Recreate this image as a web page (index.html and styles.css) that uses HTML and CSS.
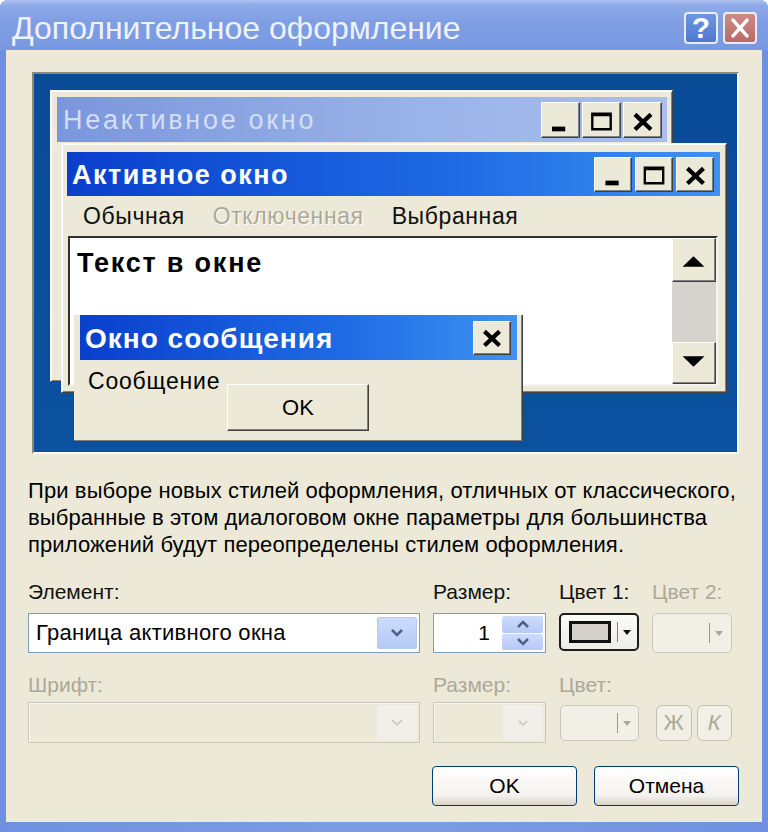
FILE: index.html
```html
<!DOCTYPE html>
<html lang="ru">
<head>
<meta charset="utf-8">
<title>Дополнительное оформление</title>
<link rel="stylesheet" href="styles.css">
</head>
<body>
<div class="dialog">
  <div class="titlebar">
    <span class="title">Дополнительное оформление</span>
    <div class="caption-btns">
      <span class="cap-btn help">?</span>
      <span class="cap-btn close">
        <svg viewBox="0 0 34 32" width="30" height="28"><path d="M9 7l16 18M25 7L9 25" stroke="#fff" stroke-width="4" stroke-linecap="round"/></svg>
      </span>
    </div>
  </div>

  <div class="content">
    <div class="preview">
      <div class="win win-inactive">
        <div class="win-title inactive-title">
          <span class="win-caption">Неактивное окно</span>
          <div class="win-btns">
            <span class="wbtn"><svg viewBox="0 0 38 36"><rect x="10" y="25" width="14" height="5"/></svg></span>
            <span class="wbtn"><svg viewBox="0 0 38 36"><path d="M8 10h22v19H8z M10.5 14h17v12.5h-17z" fill-rule="evenodd"/></svg></span>
            <span class="wbtn"><svg viewBox="0 0 38 36"><path d="M11 12l17 16M28 12L11 28" stroke="#000" stroke-width="4.5"/></svg></span>
          </div>
        </div>
      </div>

      <div class="win win-active">
        <div class="win-title active-title">
          <span class="win-caption bold">Активное окно</span>
          <div class="win-btns active-btns">
            <span class="wbtn"><svg viewBox="0 0 38 35"><rect x="11" y="24" width="14" height="5"/></svg></span>
            <span class="wbtn"><svg viewBox="0 0 38 35"><path d="M8 9h22v19H8z M10.5 13h17v12.5h-17z" fill-rule="evenodd"/></svg></span>
            <span class="wbtn"><svg viewBox="0 0 38 35"><path d="M11 11l17 16M28 11L11 27" stroke="#000" stroke-width="4.5"/></svg></span>
          </div>
        </div>
        <div class="menu">
          <span>Обычная</span>
          <span class="disabled">Отключенная</span>
          <span>Выбранная</span>
        </div>
        <div class="textarea">
          <div class="text-body">Текст в окне</div>
          <div class="scrollbar">
            <span class="sbtn"><svg viewBox="0 0 44 44" width="44" height="44"><path d="M10 29h23L21.5 18z"/></svg></span>
            <span class="track"></span>
            <span class="sbtn down"><svg viewBox="0 0 44 42" width="44" height="42"><path d="M10 14h23L21.5 25z"/></svg></span>
          </div>
        </div>
      </div>

      <div class="msgbox">
        <div class="win-title active-title msg-title">
          <span class="win-caption bold">Окно сообщения</span>
          <span class="wbtn msg-close"><svg viewBox="0 0 38 34"><path d="M11 10l16 15M27 10L11 25" stroke="#000" stroke-width="4.5"/></svg></span>
        </div>
        <div class="msg-text">Сообщение</div>
        <span class="msg-ok">OK</span>
      </div>
    </div>

    <p class="note">При выборе новых стилей оформления, отличных от классического,<br>выбранные в этом диалоговом окне параметры для большинства<br>приложений будут переопределены стилем оформления.</p>

    <div class="fields">
      <div class="field">
        <label>Элемент:</label>
        <div class="combo">
          <span class="combo-text">Граница активного окна</span>
          <span class="drop"><svg viewBox="0 0 16 16" width="16" height="16"><path d="M3 5l5 5 5-5" fill="none" stroke="#4d6185" stroke-width="2.5"/></svg></span>
        </div>
      </div>
      <div class="field">
        <label>Размер:</label>
        <div class="combo spin">
          <span class="spin-val">1</span>
          <span class="spin-btns">
            <span class="spin-b"><svg viewBox="0 0 14 10" width="14" height="10"><path d="M2 8l5-5 5 5" fill="none" stroke="#4d6185" stroke-width="2.5"/></svg></span>
            <span class="spin-b"><svg viewBox="0 0 14 10" width="14" height="10"><path d="M2 2l5 5 5-5" fill="none" stroke="#4d6185" stroke-width="2.5"/></svg></span>
          </span>
        </div>
      </div>
      <div class="field">
        <label>Цвет 1:</label>
        <div class="colorbtn focus">
          <span class="swatch"></span>
          <span class="sep"></span>
          <span class="arrow"></span>
        </div>
      </div>
      <div class="field">
        <label class="off">Цвет 2:</label>
        <div class="colorbtn off-btn">
          <span class="swatch empty"></span>
          <span class="sep"></span>
          <span class="arrow"></span>
        </div>
      </div>

      <div class="field row2">
        <label class="off">Шрифт:</label>
        <div class="combo off-combo">
          <span class="combo-text"></span>
          <span class="drop"><svg viewBox="0 0 16 16" width="16" height="16"><path d="M3 5l5 5 5-5" fill="none" stroke="#c5c5c0" stroke-width="1.5"/></svg></span>
        </div>
      </div>
      <div class="field row2">
        <label class="off">Размер:</label>
        <div class="combo off-combo">
          <span class="combo-text"></span>
          <span class="drop"><svg viewBox="0 0 16 16" width="16" height="16"><path d="M4 6l4 4 4-4" fill="none" stroke="#c5c5c0" stroke-width="1.5"/></svg></span>
        </div>
      </div>
      <div class="field row2">
        <label class="off">Цвет:</label>
        <div class="colorbtn off-btn small">
          <span class="swatch empty"></span>
          <span class="sep"></span>
          <span class="arrow"></span>
        </div>
      </div>
      <div class="field row2">
        <label>&nbsp;</label>
        <div class="styles">
          <span class="stbtn b">Ж</span>
          <span class="stbtn i">К</span>
        </div>
      </div>
    </div>

    <div class="actions">
      <span class="btn">OK</span>
      <span class="btn">Отмена</span>
    </div>
  </div>
</div>
</body>
</html>
```

FILE: styles.css
```css
body {
	margin: 0;
	font-family: "Liberation Sans", Arial, sans-serif;
}
.dialog {
	width: 768px;
	height: 832px;
	display: flex;
	flex-direction: column;
	background: linear-gradient(to right, #6f90de, #7d9de3 50%, #6f90de);
	border-radius: 8px 8px 0 0;
}
.titlebar {
	height: 50px;
	display: flex;
	align-items: center;
	padding: 0 11px 0 12px;
	border-radius: 8px 8px 0 0;
	background: linear-gradient(#b0c4f0 0, #8eaae8 5px, #7f9ee3 45%, #7898e1);
}
.title {
	flex: 1;
	color: #eef2fc;
	font-size: 32px;
	padding-top: 6px;
}
.caption-btns {
	display: flex;
	gap: 5px;
	padding-top: 6px;
}
.cap-btn {
	width: 34px;
	height: 32px;
	box-sizing: border-box;
	border: 2px solid #e8eefb;
	border-radius: 4px;
	display: flex;
	align-items: center;
	justify-content: center;
}
.help {
	background: linear-gradient(#6d95e2, #4f78d2);
	color: #fff;
	font-size: 30px;
	font-weight: bold;
}
.close {
	background: linear-gradient(#cf8a86, #b86a69);
}
.content {
	flex: 1;
	margin: 0 6px 10px;
	background: #ece9d8;
	padding-top: 22px;
}

/* preview canvas */
.preview {
	position: relative;
	margin-left: 26px;
	width: 707px;
	height: 382px;
	box-sizing: border-box;
	border: 2px solid;
	border-color: #8a8878 #fcfcf8 #fcfcf8 #8a8878;
	background: linear-gradient(#0a4b98, #0b51a0);
}
.win {
	position: absolute;
	box-sizing: border-box;
	background: #ece9d8;
	border: 1px solid;
	border-color: #f4f3ee #404040 #404040 #f4f3ee;
	box-shadow: inset 1px 1px 0 #fff, inset -1px -1px 0 #808080;
}
.win-inactive {
	left: 16px;
	top: 16px;
	width: 623px;
	height: 292px;
	padding: 6px 5px 6px 6px;
}
.win-active {
	left: 27px;
	top: 69px;
	width: 666px;
	padding: 8px 6px 6px 5px;
}
.win-title {
	display: flex;
	align-items: center;
}
.inactive-title {
	height: 45px;
	background: linear-gradient(to right, #7b96dc, #9ab3e8 60%, #a8bfec);
}
.active-title {
	height: 44px;
	background: linear-gradient(to right, #0a3fcc, #1e6be4 60%, #3f92f2);
}
.win-caption {
	flex: 1;
	font-size: 27px;
	letter-spacing: 2.7px;
	padding-left: 6px;
	padding-top: 2px;
	color: #d4def5;
}
.win-caption.bold {
	font-weight: bold;
	color: #fff;
	padding-left: 5px;
	font-size: 27px;
	letter-spacing: 1.5px;
}
.win-btns {
	display: flex;
	gap: 2px;
	margin-right: 5px;
}
.active-btns {
	gap: 3px;
	margin-right: 6px;
}
.wbtn {
	width: 39px;
	height: 36px;
	box-sizing: border-box;
	background: #ece9d8;
	border: 1px solid;
	border-color: #fff #404040 #404040 #fff;
	box-shadow: inset -1px -1px 0 #808080;
	display: block;
}
.active-btns .wbtn {
	width: 38px;
	height: 35px;
}
.wbtn svg {
	width: 100%;
	height: 100%;
	display: block;
}
.menu {
	height: 40px;
	display: flex;
	align-items: center;
	gap: 28px;
	padding-left: 16px;
	font-size: 23px;
	letter-spacing: 0.6px;
	color: #111;
}
.menu .disabled {
	color: #aca899;
	text-shadow: 1px 1px 0 #fff;
}
.textarea {
	margin-left: 1px;
	width: 650px;
	height: 150px;
	box-sizing: border-box;
	display: flex;
	background: #fff;
	border: 2px solid;
	border-color: #303030 #f4f3ee #f4f3ee #303030;
}
.text-body {
	flex: 1;
	font-size: 27px;
	letter-spacing: 1.8px;
	font-weight: bold;
	padding: 10px 7px;
}
.scrollbar {
	width: 44px;
	display: flex;
	flex-direction: column;
}
.sbtn {
	height: 44px;
	box-sizing: border-box;
	background: #ece9d8;
	border: 1px solid;
	border-color: #fff #404040 #404040 #fff;
	box-shadow: inset -1px -1px 0 #808080;
	display: block;
}
.sbtn.down {
	height: 42px;
}
.sbtn svg {
	display: block;
	width: 100%;
	height: 100%;
}
.track {
	flex: 1;
	background: #d6d3ce;
}
.msgbox {
	position: absolute;
	left: 40px;
	top: 241px;
	width: 449px;
	height: 127px;
	box-sizing: border-box;
	background: #ece9d8;
	padding: 0 5px 0 6px;
	border-right: 1px solid #404040;
	border-bottom: 1px solid #404040;
	box-shadow: inset -1px -1px 0 #808080;
}
.msg-title {
	height: 45px;
}
.msg-title .win-caption.bold {
	font-size: 28px;
	letter-spacing: 1px;
}
.msg-close {
	width: 38px;
	height: 34px;
	margin-right: 6px;
}
.msg-text {
	font-size: 23px;
	letter-spacing: 0.8px;
	line-height: 26px;
	margin-top: 8px;
	padding-left: 8px;
}
.msg-ok {
	display: flex;
	align-items: center;
	justify-content: center;
	margin: -10px 0 0 147px;
	width: 142px;
	height: 47px;
	box-sizing: border-box;
	font-size: 22px;
	border: 1px solid;
	border-color: #fff #404040 #404040 #fff;
	box-shadow: inset -1px -1px 0 #808080;
}

/* lower part */
.note {
	margin: 23px 0 0 22px;
	font-size: 22px;
	letter-spacing: 0.1px;
	line-height: 27px;
	color: #000;
	white-space: nowrap;
}
.fields {
	margin: 22px 0 0 22px;
	display: grid;
	grid-template-columns: 392px 113px 80px 80px;
	column-gap: 13px;
}
.field {
	display: flex;
	flex-direction: column;
}
.field label {
	font-size: 21px;
	line-height: 24px;
	margin-bottom: 9px;
	color: #111;
}
.field.row2 label {
	margin-top: 20px;
	margin-bottom: 5px;
}
.field label.off {
	color: #aca899;
}
.combo {
	height: 40px;
	box-sizing: border-box;
	border: 1px solid #7f9db9;
	background: #fff;
	display: flex;
	align-items: center;
}
.combo-text {
	flex: 1;
	font-size: 22px;
	letter-spacing: 0.3px;
	padding-left: 7px;
}
.drop {
	width: 40px;
	height: 32px;
	margin-right: 2px;
	box-sizing: border-box;
	border: 1px solid #b8cbf3;
	border-radius: 2px;
	background: linear-gradient(#cddcfc, #b6c9f5);
	display: flex;
	align-items: center;
	justify-content: center;
}
.spin-val {
	flex: 1;
	text-align: right;
	font-size: 21px;
	padding-right: 12px;
}
.spin-btns {
	width: 41px;
	height: 34px;
	margin-right: 2px;
	display: flex;
	flex-direction: column;
	gap: 1px;
}
.spin-b {
	flex: 1;
	background: linear-gradient(#cddcfc, #b6c9f5);
	border-radius: 2px;
	display: flex;
	align-items: center;
	justify-content: center;
}
.colorbtn {
	height: 38px;
	box-sizing: border-box;
	border-radius: 5px;
	display: flex;
	align-items: center;
	padding-left: 8px;
}
.colorbtn.focus {
	border: 2px solid #1c1c1c;
	background: linear-gradient(#fbfbf9, #eeede7);
}
.swatch {
	width: 42px;
	height: 22px;
	box-sizing: border-box;
	border: 3px solid #111;
	background: #d4d0c8;
}
.swatch.empty {
	border: 0;
	background: none;
}
.sep {
	width: 1px;
	height: 20px;
	margin-left: 6px;
	background: #808080;
}
.arrow {
	margin-left: 5px;
	width: 0;
	height: 0;
	border-left: 4px solid transparent;
	border-right: 4px solid transparent;
	border-top: 5px solid #111;
}
.off-btn {
	height: 40px;
	border: 1px solid #cac8bb;
	background: #f1efe6;
}
.off-btn .sep {
	background: #9a9888;
}
.off-btn .arrow {
	border-top-color: #aca899;
}
.off-btn.small {
	height: 36px;
	margin-top: 3px;
	width: 79px;
	margin-left: 1px;
}
.off-combo {
	height: 41px;
	border-color: #cac8bb;
	background: #ece9d8;
	box-shadow: inset 1px 1px 0 #f8f7f2;
}
.off-combo .drop {
	border: 0;
	background: #f0efe9;
	height: 35px;
}
.styles {
	display: flex;
	gap: 5px;
	margin-top: 3px;
	margin-left: 4px;
}
.stbtn {
	width: 36px;
	height: 36px;
	box-sizing: border-box;
	border: 1px solid #c2c0b2;
	border-radius: 6px;
	background: #f1efe6;
	color: #aca899;
	display: flex;
	align-items: center;
	justify-content: center;
	font-size: 22px;
}
.stbtn.i {
	font-style: italic;
}
.actions {
	display: flex;
	justify-content: flex-end;
	gap: 17px;
	margin-top: 23px;
	padding-right: 23px;
}
.btn {
	width: 145px;
	height: 40px;
	box-sizing: border-box;
	border: 1px solid #003c74;
	border-radius: 4px;
	background: linear-gradient(#ffffff, #f3f2ee 75%, #d9d4c8);
	font-size: 21px;
	display: flex;
	align-items: center;
	justify-content: center;
}
```
